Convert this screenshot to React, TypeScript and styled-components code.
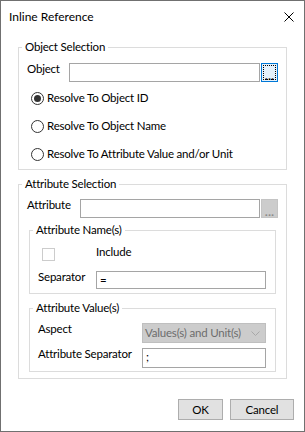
import React from 'react';
import styled, { createGlobalStyle } from 'styled-components';

const FONT = `Lato, "Noto Sans", sans-serif`;

const Global = createGlobalStyle`
  html, body { margin: 0; padding: 0; background: #fff; }
  body { font-family: ${FONT}; font-size: 11.5px; letter-spacing: -0.2px; color: #000; }
  * { box-sizing: border-box; }
`;

const Window = styled.div`
  width: 305px;
  height: 432px;
  border: 1px solid #707070;
  background: #fff;
  display: flex;
  flex-direction: column;
`;

const TitleBar = styled.div`
  height: 31px;
  display: flex;
  align-items: center;
  justify-content: space-between;
  padding: 0 10px 0 8px;
`;

const Title = styled.span`
  font-size: 12px;
  letter-spacing: 0;
  line-height: 16px;
`;

const CloseIcon = styled.svg`
  width: 10px;
  height: 10px;
  display: block;
`;

const Body = styled.div`
  padding: 7px 17px 0;
  display: flex;
  flex-direction: column;
`;

const Group = styled.fieldset<{ $inner?: boolean; $top?: number; $bottom?: number }>`
  margin: ${p => p.$top ?? 0}px ${p => (p.$inner ? 10 : 0)}px ${p => p.$bottom ?? 0}px;
  padding: 0;
  border: 1px solid #dcdcdc;
  min-width: 0;
`;

const Legend = styled.legend`
  margin-left: 3px;
  padding: 0 3px;
  line-height: 16px;
`;

const FieldRow = styled.div<{ $labelWidth: number; $top: number }>`
  display: grid;
  grid-template-columns: ${p => p.$labelWidth}px 1fr 17px;
  align-items: start;
  padding: ${p => p.$top}px 9px 0 8px;
`;

const Label = styled.span`
  line-height: 16px;
  margin-top: -2px;
  white-space: nowrap;
`;

const TextBox = styled.div<{ $h?: number }>`
  height: ${p => p.$h ?? 19}px;
  border: 1px solid #a5a5a5;
  background: #fff;
  line-height: 16px;
  padding: 0 3px;
`;

const BrowseButton = styled.button<{ $focused?: boolean }>`
  height: 19px;
  width: 17px;
  padding: 0;
  margin: 0 0 0 1px;
  border: 1px solid ${p => (p.$focused ? '#0078d7' : '#c4c4c4')};
  background: ${p => (p.$focused ? '#e5f1fb' : '#cccccc')};
  color: ${p => (p.$focused ? '#000' : '#8a8a8a')};
  font-family: "Noto Sans", sans-serif;
  font-weight: bold;
  font-size: 11px;
  line-height: 10px;
  display: flex;
  align-items: flex-end;
  justify-content: center;
  outline: ${p => (p.$focused ? '1px dotted #000' : 'none')};
  outline-offset: -3px;
`;

const RadioList = styled.div`
  display: flex;
  flex-direction: column;
  gap: 12px;
  padding: 8px 0 7px 12px;
`;

const RadioRow = styled.label`
  display: flex;
  align-items: center;
  gap: 3px;
  line-height: 16px;
  height: 16px;
`;

const RadioCircle = styled.span<{ $checked?: boolean }>`
  width: 13px;
  height: 13px;
  border-radius: 50%;
  border: 1px solid #333;
  background: #fff;
  display: flex;
  align-items: center;
  justify-content: center;
  &::after {
    content: '';
    width: 7px;
    height: 7px;
    border-radius: 50%;
    background: ${p => (p.$checked ? '#333' : 'transparent')};
  }
`;

const InnerGrid = styled.div<{ $labelWidth: number; $top: number; $bottom: number; $gap: number }>`
  display: grid;
  grid-template-columns: ${p => p.$labelWidth}px 1fr;
  row-gap: ${p => p.$gap}px;
  align-items: start;
  padding: ${p => p.$top}px 9px ${p => p.$bottom}px 8px;
`;

const CheckBox = styled.span`
  width: 13px;
  height: 13px;
  border: 1px solid #cccccc;
  background: #fff;
  margin-left: 4px;
  display: block;
`;

const InlineText = styled.span`
  line-height: 16px;
  margin-top: -4px;
`;

const Combo = styled.div`
  height: 20px;
  border: 1px solid #bfbfbf;
  background: #cccccc;
  color: #6d6d6d;
  display: flex;
  align-items: center;
  justify-content: space-between;
  padding: 0 5px 0 2px;
  line-height: 16px;
  white-space: nowrap;
`;

const Chevron = styled.svg`
  width: 9px;
  height: 5px;
  display: block;
`;

const Footer = styled.div`
  margin-top: auto;
  display: flex;
  justify-content: flex-end;
  gap: 7px;
  padding: 0 10px 11px;
`;

const DialogButton = styled.button<{ $w: number }>`
  width: ${p => p.$w}px;
  height: 21px;
  border: 1px solid #adadad;
  background: #e1e1e1;
  font-family: ${FONT};
  font-size: 11.5px;
  letter-spacing: -0.2px;
  line-height: 16px;
  padding: 0;
  color: #000;
`;

export default function App() {
  return (
    <>
      <Global />
      <Window>
        <TitleBar>
          <Title>Inline Reference</Title>
          <CloseIcon viewBox="0 0 10 10">
            <path d="M0.5 0.5 L9.5 9.5 M9.5 0.5 L0.5 9.5" stroke="#000" strokeWidth="1" fill="none" />
          </CloseIcon>
        </TitleBar>
        <Body>
          <Group>
            <Legend>Object Selection</Legend>
            <FieldRow $labelWidth={42} $top={8}>
              <Label>Object</Label>
              <TextBox />
              <BrowseButton $focused>...</BrowseButton>
            </FieldRow>
            <RadioList>
              <RadioRow><RadioCircle $checked />Resolve To Object ID</RadioRow>
              <RadioRow><RadioCircle />Resolve To Object Name</RadioRow>
              <RadioRow><RadioCircle />Resolve To Attribute Value and/or Unit</RadioRow>
            </RadioList>
          </Group>
          <Group $top={6}>
            <Legend>Attribute Selection</Legend>
            <FieldRow $labelWidth={53} $top={7}>
              <Label>Attribute</Label>
              <TextBox />
              <BrowseButton>...</BrowseButton>
            </FieldRow>
            <Group $inner $top={4}>
              <Legend>Attribute Name(s)</Legend>
              <InnerGrid $labelWidth={58} $top={10} $bottom={4} $gap={10}>
                <CheckBox />
                <InlineText>Include</InlineText>
                <Label>Separator</Label>
                <TextBox $h={18}>=</TextBox>
              </InnerGrid>
            </Group>
            <Group $inner $top={6} $bottom={6}>
              <Legend>Attribute Value(s)</Legend>
              <InnerGrid $labelWidth={104} $top={7} $bottom={3} $gap={5}>
                <Label>Aspect</Label>
                <Combo>
                  <span>Values(s) and Unit(s)</span>
                  <Chevron viewBox="0 0 9 5">
                    <path d="M0.5 0.5 L4.5 4.5 L8.5 0.5" stroke="#a8a8a8" strokeWidth="1" fill="none" />
                  </Chevron>
                </Combo>
                <Label>Attribute Separator</Label>
                <TextBox $h={20}>;</TextBox>
              </InnerGrid>
            </Group>
          </Group>
        </Body>
        <Footer>
          <DialogButton $w={45}>OK</DialogButton>
          <DialogButton $w={64}>Cancel</DialogButton>
        </Footer>
      </Window>
    </>
  );
}
